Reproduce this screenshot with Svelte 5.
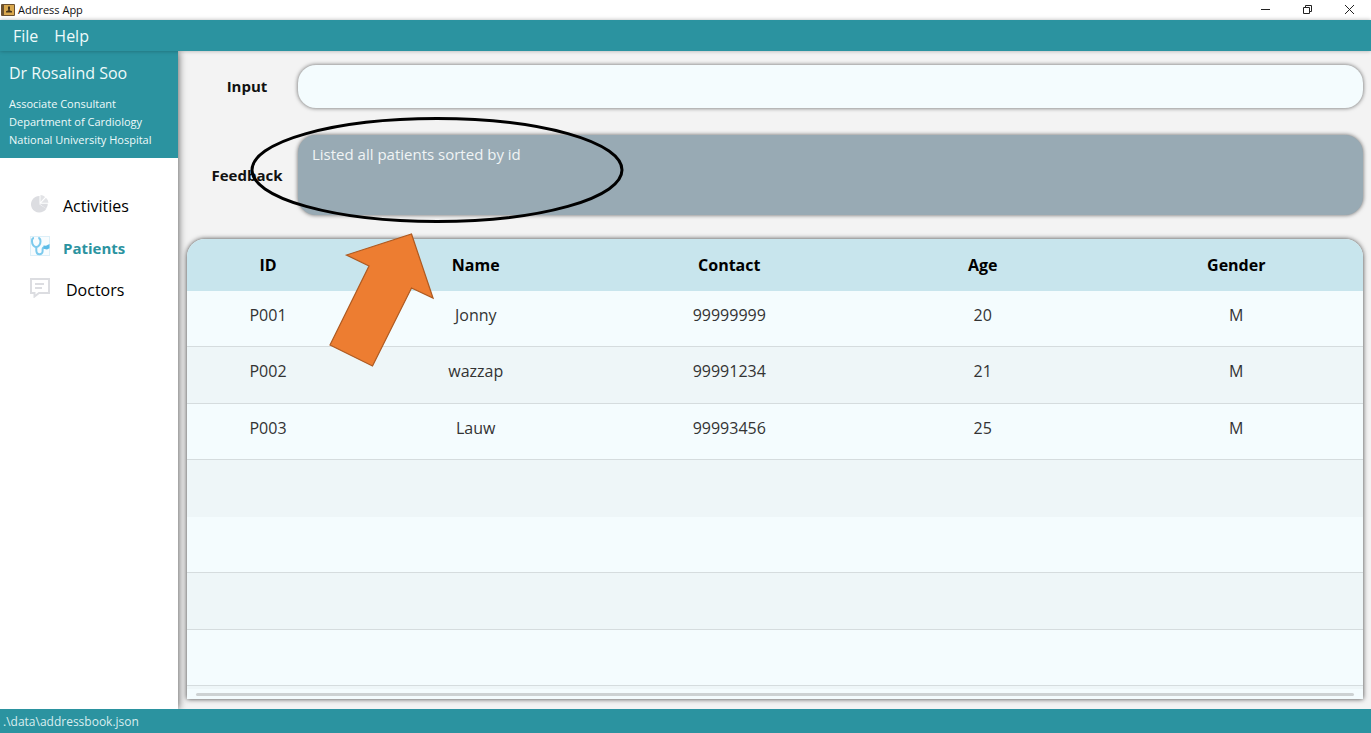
<script>
  const patients = [
    { id: 'P001', name: 'Jonny', contact: '99999999', age: 20, gender: 'M' },
    { id: 'P002', name: 'wazzap', contact: '99991234', age: 21, gender: 'M' },
    { id: 'P003', name: 'Lauw', contact: '99993456', age: 25, gender: 'M' }
  ];
  const blankRows = [1, 2, 3, 4, 5];
  const columns = ['ID', 'Name', 'Contact', 'Age', 'Gender'];
  let command = $state('');
</script>

<div class="app">
  <header class="titlebar">
    <svg class="logo" width="14" height="12" viewBox="0 0 14 12" aria-hidden="true">
      <rect width="14" height="12" rx="1" fill="#6b5130" />
      <rect x="3" y="1" width="10" height="10" fill="#d9a84e" />
      <path d="M7 2.500h2v2.500l-.4 1.200 2.400 1v1.300H5V7.200l2.400-1L7 5z" fill="#453318" />
    </svg>
    <span class="title">Address App</span>
    <div class="window-buttons">
      <button aria-label="Minimize"><svg width="11" height="11" viewBox="0 0 11 11"><path d="M1 4.500h9" /></svg></button>
      <button aria-label="Restore"><svg width="11" height="11" viewBox="0 0 11 11"><path d="M1.500 2.500h6v6h-6zM3.500 2.500v-2h6v6h-2" /></svg></button>
      <button aria-label="Close"><svg width="11" height="11" viewBox="0 0 11 11"><path d="M1 0l9 9M10 0l-9 9" /></svg></button>
    </div>
  </header>

  <nav class="menubar">
    <button>File</button>
    <button>Help</button>
  </nav>

  <div class="body">
    <aside class="sidebar">
      <section class="profile">
        <h1>Dr Rosalind Soo</h1>
        <p>Associate Consultant</p>
        <p>Department of Cardiology</p>
        <p>National University Hospital</p>
      </section>
      <nav class="tabs">
        <button>
          <svg width="20" height="20" viewBox="0 0 20 20" aria-hidden="true">
            <path d="M9.500 2v8.500l6.800 4.200A8.300 8.300 0 1 1 9.500 2z" fill="#dcdde1" />
            <path d="M9.500 9.800h8.300a8 8 0 0 1-1.700 5z" fill="#dcdde1" />
            <path d="M10.500 1a8 8 0 0 1 4.600 2l-4.600 5z" fill="#e2e3e6" />
            <path d="M16 3.800A8 8 0 0 1 18.500 8.700h-7.200z" fill="#e2e3e6" />
          </svg>
          <span>Activities</span>
        </button>
        <button class="active">
          <svg width="20" height="20" viewBox="0 0 20 20" fill="none" aria-hidden="true">
            <rect x="0.500" y="0.500" width="19" height="19" fill="#f8fcfe" stroke="#dceff8" />
            <path d="M4 2C1.800 2 2 4 2 5.500c0 3 2 5.500 4.200 5.500s4.300-2.500 4.300-5.500C10.500 4 10.500 2 8.300 2" stroke="#7ccaed" stroke-width="2" />
            <path d="M6.300 11v3.200c0 5.300 6.300 5.300 6.300 1v-2c0-1.500 1-2 2.400-2" stroke="#7ccaed" stroke-width="2" />
            <path d="M13.500 9.500l2.500.3 3.500-1.800v4.300l-2.500 1.200-3.500-.8z" fill="#5bbbe7" />
          </svg>
          <span>Patients</span>
        </button>
        <button class="doctors">
          <svg width="20" height="20" viewBox="0 0 20 20" fill="none" stroke="#dcdde1" stroke-width="2" aria-hidden="true">
            <path d="M1 1h18v14H9l-4.500 3.500V15H1z" />
            <path d="M5 6h9M5 10h7" />
          </svg>
          <span>Doctors</span>
        </button>
      </nav>
    </aside>

    <main>
      <form class="command" onsubmit={(e) => e.preventDefault()}>
        <label for="command">Input</label>
        <input id="command" type="text" bind:value={command} />
        <label for="feedback">Feedback</label>
        <textarea id="feedback" readonly value="Listed all patients sorted by id"></textarea>
      </form>

      <section class="card">
        <div class="viewport">
          <table>
            <thead>
              <tr>
                {#each columns as column}<th>{column}</th>{/each}
              </tr>
            </thead>
            <tbody>
              {#each patients as p}
                <tr>
                  <td>{p.id}</td>
                  <td>{p.name}</td>
                  <td>{p.contact}</td>
                  <td>{p.age}</td>
                  <td>{p.gender}</td>
                </tr>
              {/each}
              {#each blankRows as row (row)}
                <tr class:plain={row === 1}><td></td><td></td><td></td><td></td><td></td></tr>
              {/each}
            </tbody>
          </table>
        </div>
        <div class="scroll"></div>
      </section>
    </main>
  </div>

  <footer>.\data\addressbook.json</footer>

  <svg class="ellipse" width="374" height="108" viewBox="0 0 374 108" aria-hidden="true">
    <ellipse cx="187" cy="54" rx="185" ry="51.500" fill="none" stroke="#000" stroke-width="3" />
  </svg>
  <svg class="arrow" width="106" height="134" viewBox="0 0 106 134" aria-hidden="true">
    <path d="M83.500 1L105 65 83.500 55 44.500 133 2 112 41 33 18.500 22z" fill="#ed7d31" stroke="#ae5a21" stroke-width="1.200" />
  </svg>
</div>

<style>
  :global(body) {
    margin: 0;
  }
  .app {
    position: relative;
    display: flex;
    flex-direction: column;
    height: 100vh;
    overflow: hidden;
    background: #f3f3f3;
    color: #111;
    font-family: 'Open Sans', 'Noto Sans', sans-serif;
    font-size: 16px;
    line-height: 20px;
  }
  button {
    margin: 0;
    padding: 0;
    border: 0;
    background: none;
    color: inherit;
    font: inherit;
  }
  .titlebar {
    display: flex;
    align-items: center;
    flex: none;
    height: 20px;
    background: #fff;
  }
  .logo {
    margin-left: 1px;
  }
  .title {
    margin-left: 3px;
    font-size: 11px;
    line-height: 18px;
  }
  .window-buttons {
    display: flex;
    margin: 0 1px 0 auto;
  }
  .window-buttons button {
    display: grid;
    place-items: center;
    width: 42px;
    height: 18px;
  }
  .window-buttons svg {
    fill: none;
    stroke: #222;
  }
  .menubar {
    position: relative;
    z-index: 1;
    display: flex;
    flex: none;
    gap: 16px;
    height: 31px;
    padding-left: 13px;
    background: #2b93a0;
    box-shadow: 0 0 4px rgba(0, 0, 0, 0.3);
    color: #eefafa;
  }
  .body {
    display: flex;
    flex: 1;
    min-height: 0;
  }
  .sidebar {
    flex: none;
    width: 178px;
    background: #fff;
    box-shadow: 0 0 8px rgba(0, 0, 0, 0.7);
  }
  .profile {
    padding: 12px 0 9px 9px;
    background: #2b93a0;
    color: #eefafa;
    font-size: 11px;
    line-height: 18px;
    white-space: nowrap;
  }
  h1 {
    margin: 0 0 12px;
    font-size: 16px;
    font-weight: 400;
    line-height: 20px;
  }
  p {
    margin: 0;
  }
  .tabs {
    display: flex;
    flex-direction: column;
    padding: 27px 0 0 30px;
  }
  .tabs button {
    display: flex;
    gap: 13px;
    height: 42px;
    align-items: center;
    color: #000;
    text-align: left;
  }
  .tabs .active {
    color: #2b93a0;
    font-size: 15px;
    font-weight: 700;
  }
  .tabs .doctors {
    gap: 16px;
  }
  .tabs svg {
    margin-bottom: 4px;
  }
  main {
    display: flex;
    flex: 1;
    flex-direction: column;
    gap: 24px;
    min-width: 0;
    padding: 14px 8px 10px 9px;
  }
  .command {
    display: grid;
    grid-template-columns: 103px 1fr;
    grid-template-rows: 43px 80px;
    gap: 27px 8px;
    align-items: center;
    font-size: 15px;
  }
  label {
    padding: 0 0 1px 17px;
    font-weight: 700;
    text-align: center;
  }
  input,
  textarea {
    box-sizing: border-box;
    width: 100%;
    height: 100%;
    margin: 0;
    padding: 9px 14px;
    border: 0;
    border-radius: 18px;
    outline: 0;
    background: #f4fcfe;
    box-shadow: 0 0 4px rgba(0, 0, 0, 0.6);
    color: #222;
    font: inherit;
    resize: none;
  }
  textarea {
    background: #98aab4;
    color: #f0f4f5;
  }
  .card {
    display: flex;
    flex: 1;
    flex-direction: column;
    min-height: 0;
    overflow: hidden;
    border-radius: 18px 18px 0 0;
    background: #f4fcfe;
    box-shadow: 0 0 5px rgba(0, 0, 0, 0.75);
  }
  .viewport {
    flex: 1;
    min-height: 0;
    overflow: hidden;
  }
  .scroll {
    flex: none;
    height: 3px;
    margin: 4px 9px 3px;
    border-radius: 2px;
    background: #cdd2d3;
  }
  table {
    width: 100%;
    border-collapse: separate;
    border-spacing: 0;
    table-layout: fixed;
  }
  th,
  td {
    box-sizing: border-box;
    padding: 0;
    text-align: center;
  }
  th {
    height: 52px;
    background: #c8e5ed;
    color: #000;
  }
  th:first-child {
    width: 162px;
  }
  td {
    height: 56px;
    padding-bottom: 8px;
    border-bottom: 1px solid #d5dcde;
    color: #333;
  }
  tr:nth-child(even) td {
    height: 57px;
    background: #eef6f8;
  }
  .plain td {
    border-bottom-color: #eef6f8;
  }
  footer {
    z-index: 1;
    flex: none;
    height: 24px;
    padding: 0 3px;
    background: #2b93a0;
    color: #d9edef;
    font-size: 12px;
    line-height: 26px;
  }
  .ellipse,
  .arrow {
    position: absolute;
    pointer-events: none;
  }
  .ellipse {
    top: 116px;
    left: 250px;
  }
  .arrow {
    top: 233px;
    left: 328px;
  }
</style>
